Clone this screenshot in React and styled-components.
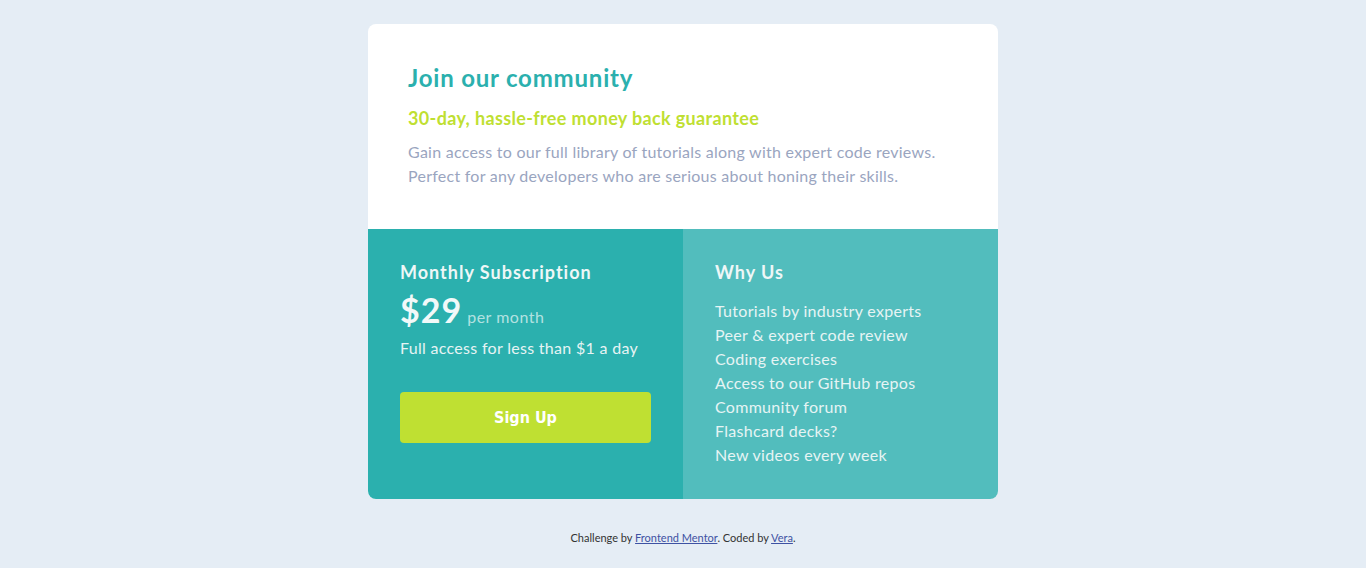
import React from 'react';
import styled, { createGlobalStyle } from 'styled-components';

const GlobalStyle = createGlobalStyle`
  * { box-sizing: border-box; }
  body {
    margin: 0;
    background: #e5edf5;
    font-family: 'Lato', 'Liberation Sans', sans-serif;
  }
`;

const Page = styled.main`
  min-height: 568px;
  display: flex;
  flex-direction: column;
  align-items: center;
  padding-top: 24px;
`;

const Card = styled.section`
  width: 630px;
  border-radius: 8px;
  overflow: hidden;
  background: #fff;
`;

const Intro = styled.div`
  padding: 39px 40px 0;
  height: 205px;
`;

const Title = styled.h1`
  margin: 0 0 14px;
  color: #2bb0ae;
  font-size: 24px;
  font-weight: 700;
  line-height: 30px;
  letter-spacing: 0.8px;
`;

const Guarantee = styled.h2`
  margin: 0 0 11px;
  color: #bfdf32;
  font-size: 18px;
  font-weight: 700;
  line-height: 22px;
  letter-spacing: 0.35px;
`;

const Text = styled.p`
  margin: 0;
  color: #9aa5bf;
  font-size: 16px;
  line-height: 24px;
  letter-spacing: 0.25px;
`;

const Columns = styled.div`
  display: grid;
  grid-template-columns: 1fr 1fr;
  height: 270px;
`;

const Panel = styled.div`
  background: ${p => p.$light ? '#52bdbd' : '#2bb0ae'};
  padding: 30px 32px;
  color: #ffffff;
`;

const PanelTitle = styled.h3`
  margin: 0 0 ${p => p.$gap}px;
  font-size: 18px;
  font-weight: 700;
  line-height: 26px;
  letter-spacing: 1px;
  color: #eef7f7;
`;

const PriceRow = styled.div`
  display: flex;
  align-items: baseline;
  gap: 5px;
  height: 36px;
  margin-bottom: 9px;
`;

const Price = styled.span`
  font-size: 34px;
  font-weight: 700;
  line-height: 36px;
  letter-spacing: 1px;
  color: #f2f9f9;
`;

const Per = styled.span`
  font-size: 16px;
  letter-spacing: 0.5px;
  color: rgba(255, 255, 255, 0.65);
`;

const Note = styled.p`
  margin: 0 0 33px;
  font-size: 16px;
  line-height: 22px;
  letter-spacing: 0.3px;
  color: #e6f4f4;
`;

const Button = styled.button`
  display: block;
  width: 251px;
  height: 51px;
  border: none;
  border-radius: 4px;
  background: #bfe032;
  color: #fff;
  font-family: 'DejaVu Sans Condensed', 'DejaVu Sans', sans-serif;
  font-stretch: condensed;
  font-weight: 700;
  font-size: 16px;
  cursor: pointer;
`;

const List = styled.ul`
  list-style: none;
  margin: 0;
  padding: 0;
  font-size: 16px;
  line-height: 24px;
  letter-spacing: 0.3px;
  color: #e6f4f4;
`;

const Footer = styled.footer`
  margin-top: 32px;
  font-size: 11px;
  color: #333;

  a { color: #3e52a3; }
`;

const reasons = [
  'Tutorials by industry experts',
  'Peer & expert code review',
  'Coding exercises',
  'Access to our GitHub repos',
  'Community forum',
  'Flashcard decks?',
  'New videos every week',
];

export default function App() {
  return (
    <>
      <GlobalStyle />
      <Page>
        <Card>
          <Intro>
            <Title>Join our community</Title>
            <Guarantee>30-day, hassle-free money back guarantee</Guarantee>
            <Text>
              Gain access to our full library of tutorials along with expert code reviews.
              Perfect for any developers who are serious about honing their skills.
            </Text>
          </Intro>
          <Columns>
            <Panel>
              <PanelTitle $gap={7}>Monthly Subscription</PanelTitle>
              <PriceRow>
                <Price>$29</Price>
                <Per>per month</Per>
              </PriceRow>
              <Note>Full access for less than $1 a day</Note>
              <Button>Sign Up</Button>
            </Panel>
            <Panel $light>
              <PanelTitle $gap={14}>Why Us</PanelTitle>
              <List>
                {reasons.map(r => <li key={r}>{r}</li>)}
              </List>
            </Panel>
          </Columns>
        </Card>
        <Footer>
          Challenge by <a href="#">Frontend Mentor</a>. Coded by <a href="#">Vera</a>.
        </Footer>
      </Page>
    </>
  );
}
